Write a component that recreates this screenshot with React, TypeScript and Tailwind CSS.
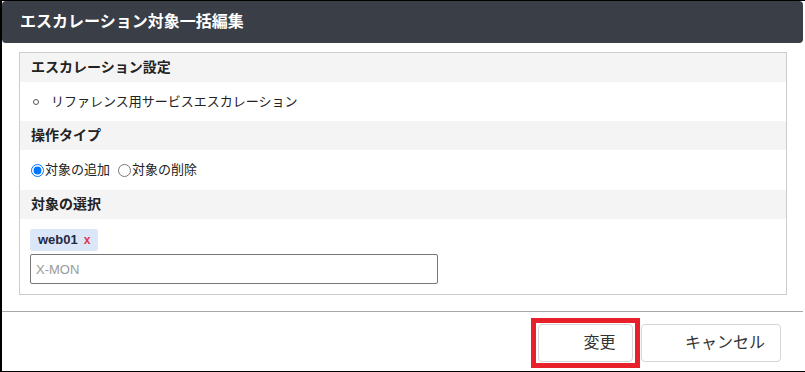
// 対象一括編集ダイアログ（エスカレーション）の再現
const jp = "font-['Liberation_Sans','Noto_Sans_CJK_JP',sans-serif]";

function SectionHead({ children }: { children: React.ReactNode }) {
  return (
    <div className="flex h-[29px] items-center bg-[#f4f4f4] pl-[11px] text-[14px] font-bold text-[#222]">
      {children}
    </div>
  );
}

export default function App() {
  return (
    <div
      className={`${jp} flex h-[372px] w-[805px] flex-col border-t border-b border-l-2 border-black bg-white`}
    >
      {/* タイトルバー */}
      <div className="flex h-[42px] w-[801px] shrink-0 items-center rounded-[4px] bg-[#3a3e47] pl-[18px] text-[16px] font-bold text-white">
        エスカレーション対象一括編集
      </div>

      {/* 本体 */}
      <div className="ml-[17px] mt-[9px] w-[768px] border border-[#cccccc]">
        <SectionHead>エスカレーション設定</SectionHead>
        <div className="flex h-[39px] items-center pl-[13px] text-[13px] text-[#222]">
          <span className="mr-[12px] h-[6px] w-[6px] rounded-full border-[1.5px] border-[#555]" />
          リファレンス用サービスエスカレーション
        </div>

        <SectionHead>操作タイプ</SectionHead>
        <div className="flex h-[40px] items-center pl-[11px] text-[13px] text-[#222]">
          <label className="flex items-center">
            <input type="radio" name="op" defaultChecked className="h-[13px] w-[13px]" />
            <span className="ml-[1px]">対象の追加</span>
          </label>
          <label className="ml-[8px] flex items-center">
            <input type="radio" name="op" className="h-[13px] w-[13px]" />
            <span className="ml-[1px]">対象の削除</span>
          </label>
        </div>

        <SectionHead>対象の選択</SectionHead>
        <div className="flex flex-col items-start px-[10px] pt-[10px] pb-[10px]">
          <span className="flex h-[22px] items-center rounded-[3px] bg-[#dbe6f8] pl-[8px] pr-[8px] text-[13px] font-bold text-[#1f2a44]">
            web01
            <span className="ml-[6px] text-[12px] text-[#e0364f]">x</span>
          </span>
          <input
            placeholder="X-MON"
            className="mt-[3px] h-[30px] w-[408px] rounded-[2px] border border-[#767676] px-[5px] text-[13px] placeholder:text-[#9a9a9a] focus:outline-none"
          />
        </div>
      </div>

      {/* フッター */}
      <div className="mt-[16px] h-px w-[801px] bg-[#a8a8a8]" />
      <div className="mt-[6px] flex justify-end pr-[24px]">
        <div className="border-[5px] border-[#e8202a] px-[2px] py-px">
          <button className="flex h-[38px] w-[95px] items-center justify-center rounded-[4px] border border-[#d6d6d6] bg-white pl-[28px] text-[16px] text-[#333]">
            変更
          </button>
        </div>
        <button className="ml-px mt-[6px] flex h-[38px] w-[140px] items-center justify-center rounded-[4px] border border-[#d6d6d6] bg-white pl-[28px] text-[16px] text-[#333]">
          キャンセル
        </button>
      </div>
    </div>
  );
}
